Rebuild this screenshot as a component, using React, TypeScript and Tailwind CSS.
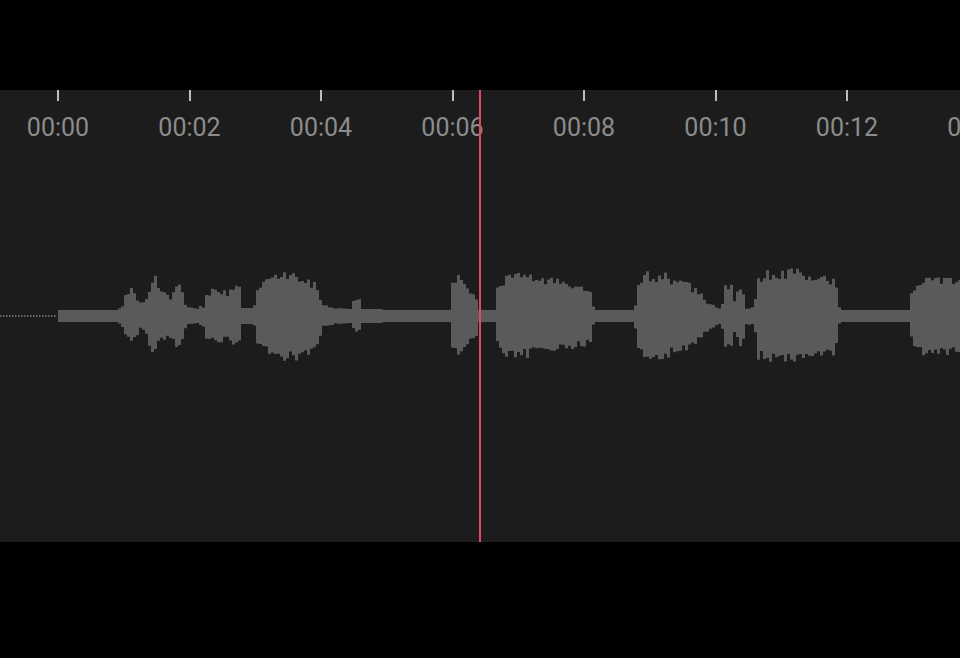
import React from "react";

// envelope keypoints: [x, half-height]
const ENVELOPE: [number, number][] = [
  [58, 6], [118, 6], [122, 10], [126, 22], [132, 26], [136, 22], [140, 12], [146, 18],
  [150, 30], [156, 40], [160, 22], [166, 26], [172, 18], [178, 34], [182, 28], [186, 10],
  [196, 8], [204, 10], [206, 22], [215, 26], [228, 24], [236, 32], [240, 26], [242, 8],
  [254, 8], [258, 28], [270, 36], [285, 45], [300, 40], [312, 34], [318, 30], [322, 12],
  [336, 8], [352, 7], [354, 16], [360, 16], [362, 7], [380, 7], [385, 6], [450, 6],
  [452, 36], [460, 38], [468, 30], [470, 24], [476, 24], [478, 6], [495, 6], [497, 30],
  [510, 40], [530, 38], [560, 34], [580, 30], [590, 28], [594, 6], [635, 6], [637, 32],
  [648, 42], [665, 40], [685, 34], [700, 22], [710, 12], [722, 8], [724, 30], [732, 30],
  [734, 14], [740, 30], [743, 30], [745, 8], [755, 10], [757, 40], [770, 44], [790, 45],
  [810, 40], [835, 36], [840, 6], [910, 6], [912, 26], [920, 36], [935, 38], [960, 34],
];

const CENTER = 226;
const TICK_STEP = 131.5;

function envAt(x: number) {
  for (let i = 0; i < ENVELOPE.length - 1; i++) {
    const [x0, a0] = ENVELOPE[i];
    const [x1, a1] = ENVELOPE[i + 1];
    if (x >= x0 && x <= x1) {
      const t = x1 === x0 ? 0 : (x - x0) / (x1 - x0);
      return a0 + (a1 - a0) * t;
    }
  }
  return 6;
}

function rng(seed: number) {
  let s = seed;
  return () => {
    s = (s * 16807) % 2147483647;
    return (s - 1) / 2147483646;
  };
}

function buildPath() {
  const rand = rng(42);
  const top: string[] = [];
  const bottom: string[] = [];
  const w = 3;
  for (let x = 58; x < 960; x += w) {
    const a = envAt(x + w / 2);
    const quiet = a <= 8;
    const up = quiet ? a : Math.max(6, a * (0.82 + 0.28 * rand()));
    const down = quiet ? a : Math.max(6, a * (0.82 + 0.28 * rand()));
    top.push(`L${x},${CENTER - up} L${x + w},${CENTER - up}`);
    bottom.unshift(`L${x + w},${CENTER + down} L${x},${CENTER + down}`);
  }
  return `M58,${CENTER} ${top.join(" ")} ${bottom.join(" ")} Z`;
}

const WAVE_PATH = buildPath();

const LABELS = ["00:00", "00:02", "00:04", "00:06", "00:08", "00:10", "00:12", "00:14"];

export default function App() {
  return (
    <div className="w-[960px] h-[658px] bg-black flex flex-col overflow-hidden">
      <div className="h-[90px] shrink-0" />
      <div className="relative h-[452px] shrink-0 bg-[#1c1c1c]">
        {/* ruler */}
        {LABELS.map((label, i) => {
          const x = 58 + i * TICK_STEP;
          return (
            <div key={label} className="absolute top-0" style={{ left: x }}>
              <div className="absolute left-[-1px] top-0 w-[2px] h-[11px] bg-[#bdbdbd]" />
              <div
                className="absolute top-[25px] -translate-x-1/2 text-[25px] leading-none text-[#8c8c8c] whitespace-nowrap"
                style={{ fontFamily: "Roboto, 'Liberation Sans', sans-serif" }}
              >
                {label}
              </div>
            </div>
          );
        })}

        {/* waveform */}
        <svg className="absolute inset-0" width="960" height="452" viewBox="0 0 960 452">
          <line x1="0" y1={CENTER} x2="57" y2={CENTER} stroke="#6a6a6a" strokeWidth="2" strokeDasharray="1.5 1.5" />
          <path d={WAVE_PATH} fill="#5a5a5a" />
        </svg>

        {/* playhead */}
        <div className="absolute top-0 bottom-0 left-[479px] w-[2px] bg-[#e04860]" />
      </div>
      <div className="flex-1" />
    </div>
  );
}
